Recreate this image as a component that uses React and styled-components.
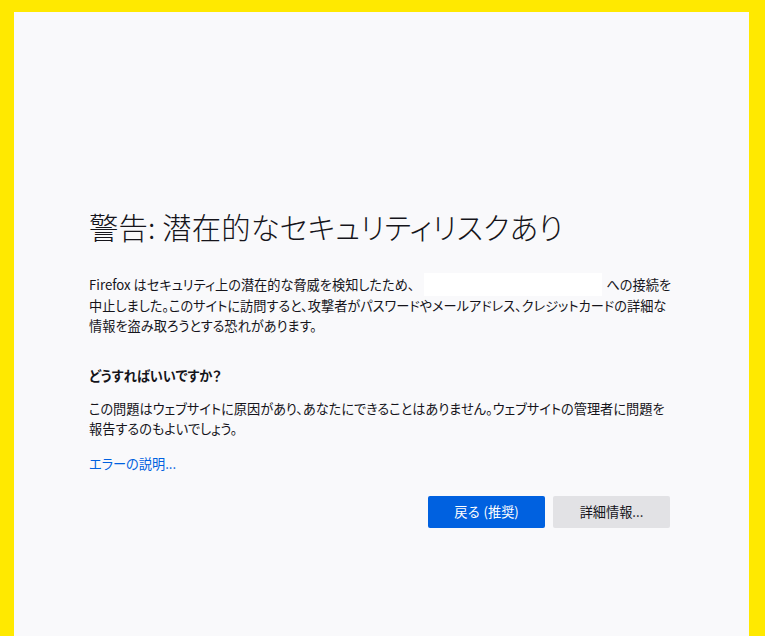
import React from 'react';
import styled, { createGlobalStyle } from 'styled-components';

const GlobalStyle = createGlobalStyle`
  html, body {
    margin: 0;
    padding: 0;
    background: #ffe900;
  }
  body {
    font-family: "Noto Sans CJK JP", "Noto Sans", sans-serif;
    font-feature-settings: "palt" 1;
  }
`;

const Frame = styled.div`
  height: 636px;
  box-sizing: border-box;
  padding: 12px 16px 0 14px;
  background: #ffe900;
`;

const Page = styled.main`
  height: 100%;
  background: #f9f9fb;
  box-sizing: border-box;
  padding: 186px 0 0 75px;
  color: #15141a;
`;

const Content = styled.div`
  width: 581px;
  display: flex;
  flex-direction: column;
`;

const Title = styled.h1`
  margin: 0 0 21px;
  font-size: 29.3px;
  font-weight: 300;
  line-height: 56px;
  letter-spacing: 0.2px;
  white-space: nowrap;
`;

const Para = styled.p`
  margin: 0 0 ${p => p.gap || 0}px;
  font-size: 13.2px;
  line-height: 20.5px;
  white-space: nowrap;
`;

const Line = styled.span`
  display: block;
`;

const Redacted = styled.span`
  display: inline-block;
  width: 178px;
  height: 23px;
  background: #fff;
  vertical-align: middle;
  margin: -4px 4px 0 10px;
`;

const Heading = styled.h2`
  margin: 0 0 13px;
  font-size: 13.2px;
  font-weight: 700;
  line-height: 20px;
`;

const Link = styled.a`
  font-size: 13.2px;
  line-height: 20px;
  color: #0061e0;
  text-decoration: none;
  align-self: flex-start;
  cursor: pointer;
`;

const Actions = styled.div`
  display: flex;
  justify-content: flex-end;
  gap: 8px;
  margin-top: 22px;
`;

const Button = styled.button`
  width: 117px;
  height: 32px;
  border: none;
  border-radius: 2px;
  font-family: inherit;
  font-size: 13.2px;
  background: ${p => (p.primary ? '#0061e0' : '#e2e2e5')};
  color: ${p => (p.primary ? '#fff' : '#15141a')};
  cursor: pointer;
`;

export default function App() {
  return (
    <>
      <GlobalStyle />
      <Frame>
        <Page>
          <Content>
            <Title>警告: 潜在的なセキュリティリスクあり</Title>
            <Para gap={29}>
              <Line>
                Firefox はセキュリティ上の潜在的な脅威を検知したため、<Redacted />への接続を
              </Line>
              <Line>
                中止しました。このサイトに訪問すると、攻撃者がパスワードやメールアドレス、クレジットカードの詳細な
              </Line>
              <Line>情報を盗み取ろうとする恐れがあります。</Line>
            </Para>
            <Heading>どうすればいいですか？</Heading>
            <Para gap={14}>
              <Line>
                この問題はウェブサイトに原因があり、あなたにできることはありません。ウェブサイトの管理者に問題を
              </Line>
              <Line>報告するのもよいでしょう。</Line>
            </Para>
            <Link>エラーの説明...</Link>
            <Actions>
              <Button primary>戻る (推奨)</Button>
              <Button>詳細情報...</Button>
            </Actions>
          </Content>
        </Page>
      </Frame>
    </>
  );
}
